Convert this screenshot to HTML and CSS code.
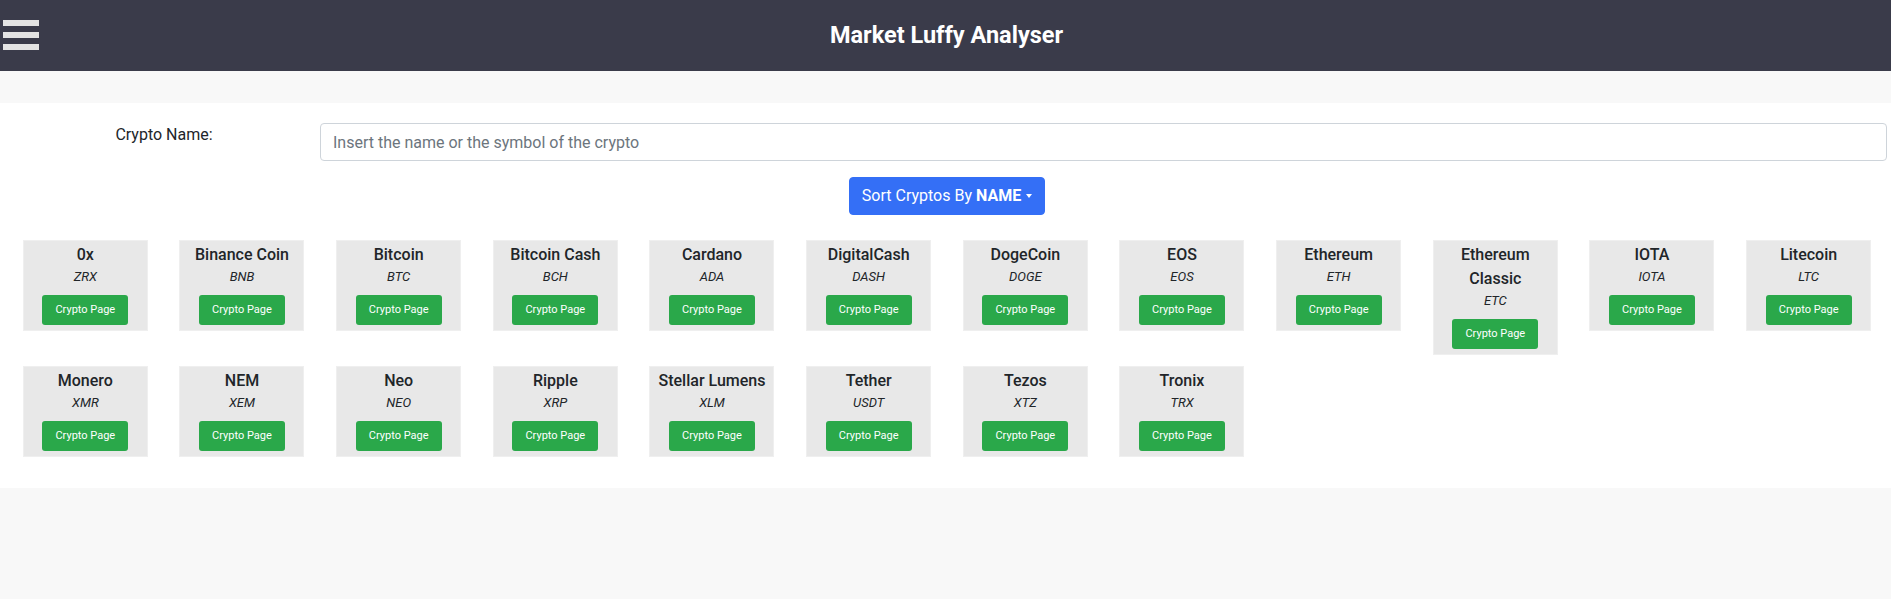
FILE: index.html
```html
<!DOCTYPE html>
<html lang="en">
<head>
<meta charset="utf-8">
<title>Market Luffy Analyser</title>
<link rel="stylesheet" href="styles.css">
</head>
<body>
<header class="topbar">
  <div class="menu" aria-label="menu">
    <span class="bar"></span>
    <span class="bar"></span>
    <span class="bar"></span>
  </div>
  <h1 class="title">Market Luffy Analyser</h1>
  <div class="spacer"></div>
</header>
<div class="gap"></div>
<main class="panel">
  <div class="search-row">
    <label class="search-label" for="q">Crypto Name:</label>
    <input class="search-input" id="q" type="text" placeholder="Insert the name or the symbol of the crypto">
  </div>
  <div class="sort-row">
    <button class="sort-btn" type="button">Sort Cryptos By <b>NAME</b></button>
  </div>
  <div class="cards">
    <div class="card"><div class="name">0x</div><div class="sym">ZRX</div><a class="go">Crypto Page</a></div>
    <div class="card"><div class="name">Binance Coin</div><div class="sym">BNB</div><a class="go">Crypto Page</a></div>
    <div class="card"><div class="name">Bitcoin</div><div class="sym">BTC</div><a class="go">Crypto Page</a></div>
    <div class="card"><div class="name">Bitcoin Cash</div><div class="sym">BCH</div><a class="go">Crypto Page</a></div>
    <div class="card"><div class="name">Cardano</div><div class="sym">ADA</div><a class="go">Crypto Page</a></div>
    <div class="card"><div class="name">DigitalCash</div><div class="sym">DASH</div><a class="go">Crypto Page</a></div>
    <div class="card"><div class="name">DogeCoin</div><div class="sym">DOGE</div><a class="go">Crypto Page</a></div>
    <div class="card"><div class="name">EOS</div><div class="sym">EOS</div><a class="go">Crypto Page</a></div>
    <div class="card"><div class="name">Ethereum</div><div class="sym">ETH</div><a class="go">Crypto Page</a></div>
    <div class="card"><div class="name">Ethereum Classic</div><div class="sym">ETC</div><a class="go">Crypto Page</a></div>
    <div class="card"><div class="name">IOTA</div><div class="sym">IOTA</div><a class="go">Crypto Page</a></div>
    <div class="card"><div class="name">Litecoin</div><div class="sym">LTC</div><a class="go">Crypto Page</a></div>
    <div class="card"><div class="name">Monero</div><div class="sym">XMR</div><a class="go">Crypto Page</a></div>
    <div class="card"><div class="name">NEM</div><div class="sym">XEM</div><a class="go">Crypto Page</a></div>
    <div class="card"><div class="name">Neo</div><div class="sym">NEO</div><a class="go">Crypto Page</a></div>
    <div class="card"><div class="name">Ripple</div><div class="sym">XRP</div><a class="go">Crypto Page</a></div>
    <div class="card"><div class="name">Stellar Lumens</div><div class="sym">XLM</div><a class="go">Crypto Page</a></div>
    <div class="card"><div class="name">Tether</div><div class="sym">USDT</div><a class="go">Crypto Page</a></div>
    <div class="card"><div class="name">Tezos</div><div class="sym">XTZ</div><a class="go">Crypto Page</a></div>
    <div class="card"><div class="name">Tronix</div><div class="sym">TRX</div><a class="go">Crypto Page</a></div>
  </div>
</main>
</body>
</html>
```
FILE: styles.css
```css
* { box-sizing: border-box; }
html, body { margin: 0; padding: 0; }
body {
  background: #f8f8f8;
  font-family: Roboto, "Liberation Sans", sans-serif;
  color: #212529;
  font-size: 16px;
  line-height: 1.5;
}
.topbar {
  height: 71px;
  background: #3a3b4a;
  display: grid;
  grid-template-columns: 1fr auto 1fr;
  align-items: center;
}
.menu {
  display: flex;
  flex-direction: column;
  gap: 6px;
  padding-left: 3px;
  margin-top: -1px;
}
.bar {
  display: block;
  width: 36px;
  height: 6px;
  background: #e4e4e4;
}
.title {
  margin: 0;
  color: #ffffff;
  font-size: 23.5px;
  font-weight: 700;
  line-height: 30px;
  margin-top: -2px;
  padding-left: 2px;
}
.gap { height: 32px; }
.panel {
  background: #ffffff;
  padding: 20px 0 31px;
}
.search-row {
  display: flex;
  align-items: flex-start;
}
.search-label {
  width: 312px;
  margin-left: 8px;
  text-align: center;
  line-height: 24px;
}
.search-input {
  flex: 1;
  margin-right: 4px;
  height: 38px;
  border: 1px solid #ced4da;
  border-radius: 4px;
  padding: 6px 12px;
  font-family: inherit;
  font-size: 16px;
  color: #495057;
  background: #fff;
}
.search-input::placeholder { color: #6c757d; }
.sort-row {
  display: flex;
  justify-content: center;
  margin-top: 16px;
  padding-left: 3px;
}
.sort-btn {
  height: 38px;
  padding: 6px 12px;
  border: 1px solid #346ff6;
  background: #346ff6;
  color: #fff;
  border-radius: 4px;
  font-family: inherit;
  font-size: 16px;
  line-height: 24px;
}
.sort-btn b { font-weight: 700; }
.sort-btn::after {
  content: "";
  display: inline-block;
  margin-left: 5px;
  vertical-align: 3px;
  border-top: 4px solid #fff;
  border-left: 3.5px solid transparent;
  border-right: 3.5px solid transparent;
}
.cards {
  display: grid;
  grid-template-columns: repeat(12, 1fr);
  row-gap: 11px;
  align-items: start;
  margin: 25px 4px 0 7px;
}
.card {
  justify-self: center;
  width: 125px;
  background: #e8e8e8;
  border: 1px solid #efefef;
  text-align: center;
  padding: 2px 4px 5.5px;
  display: flex;
  flex-direction: column;
  align-items: center;
}
.name {
  font-size: 16px;
  font-weight: 500;
  line-height: 24px;
}
.sym {
  font-size: 13px;
  font-style: italic;
  line-height: 19.5px;
}
.go {
  display: block;
  margin-top: 8px;
  height: 30px;
  padding: 6px 13px;
  background: #2aa84a;
  color: #fff;
  border-radius: 3px;
  font-size: 11px;
  line-height: 18px;
}
```
